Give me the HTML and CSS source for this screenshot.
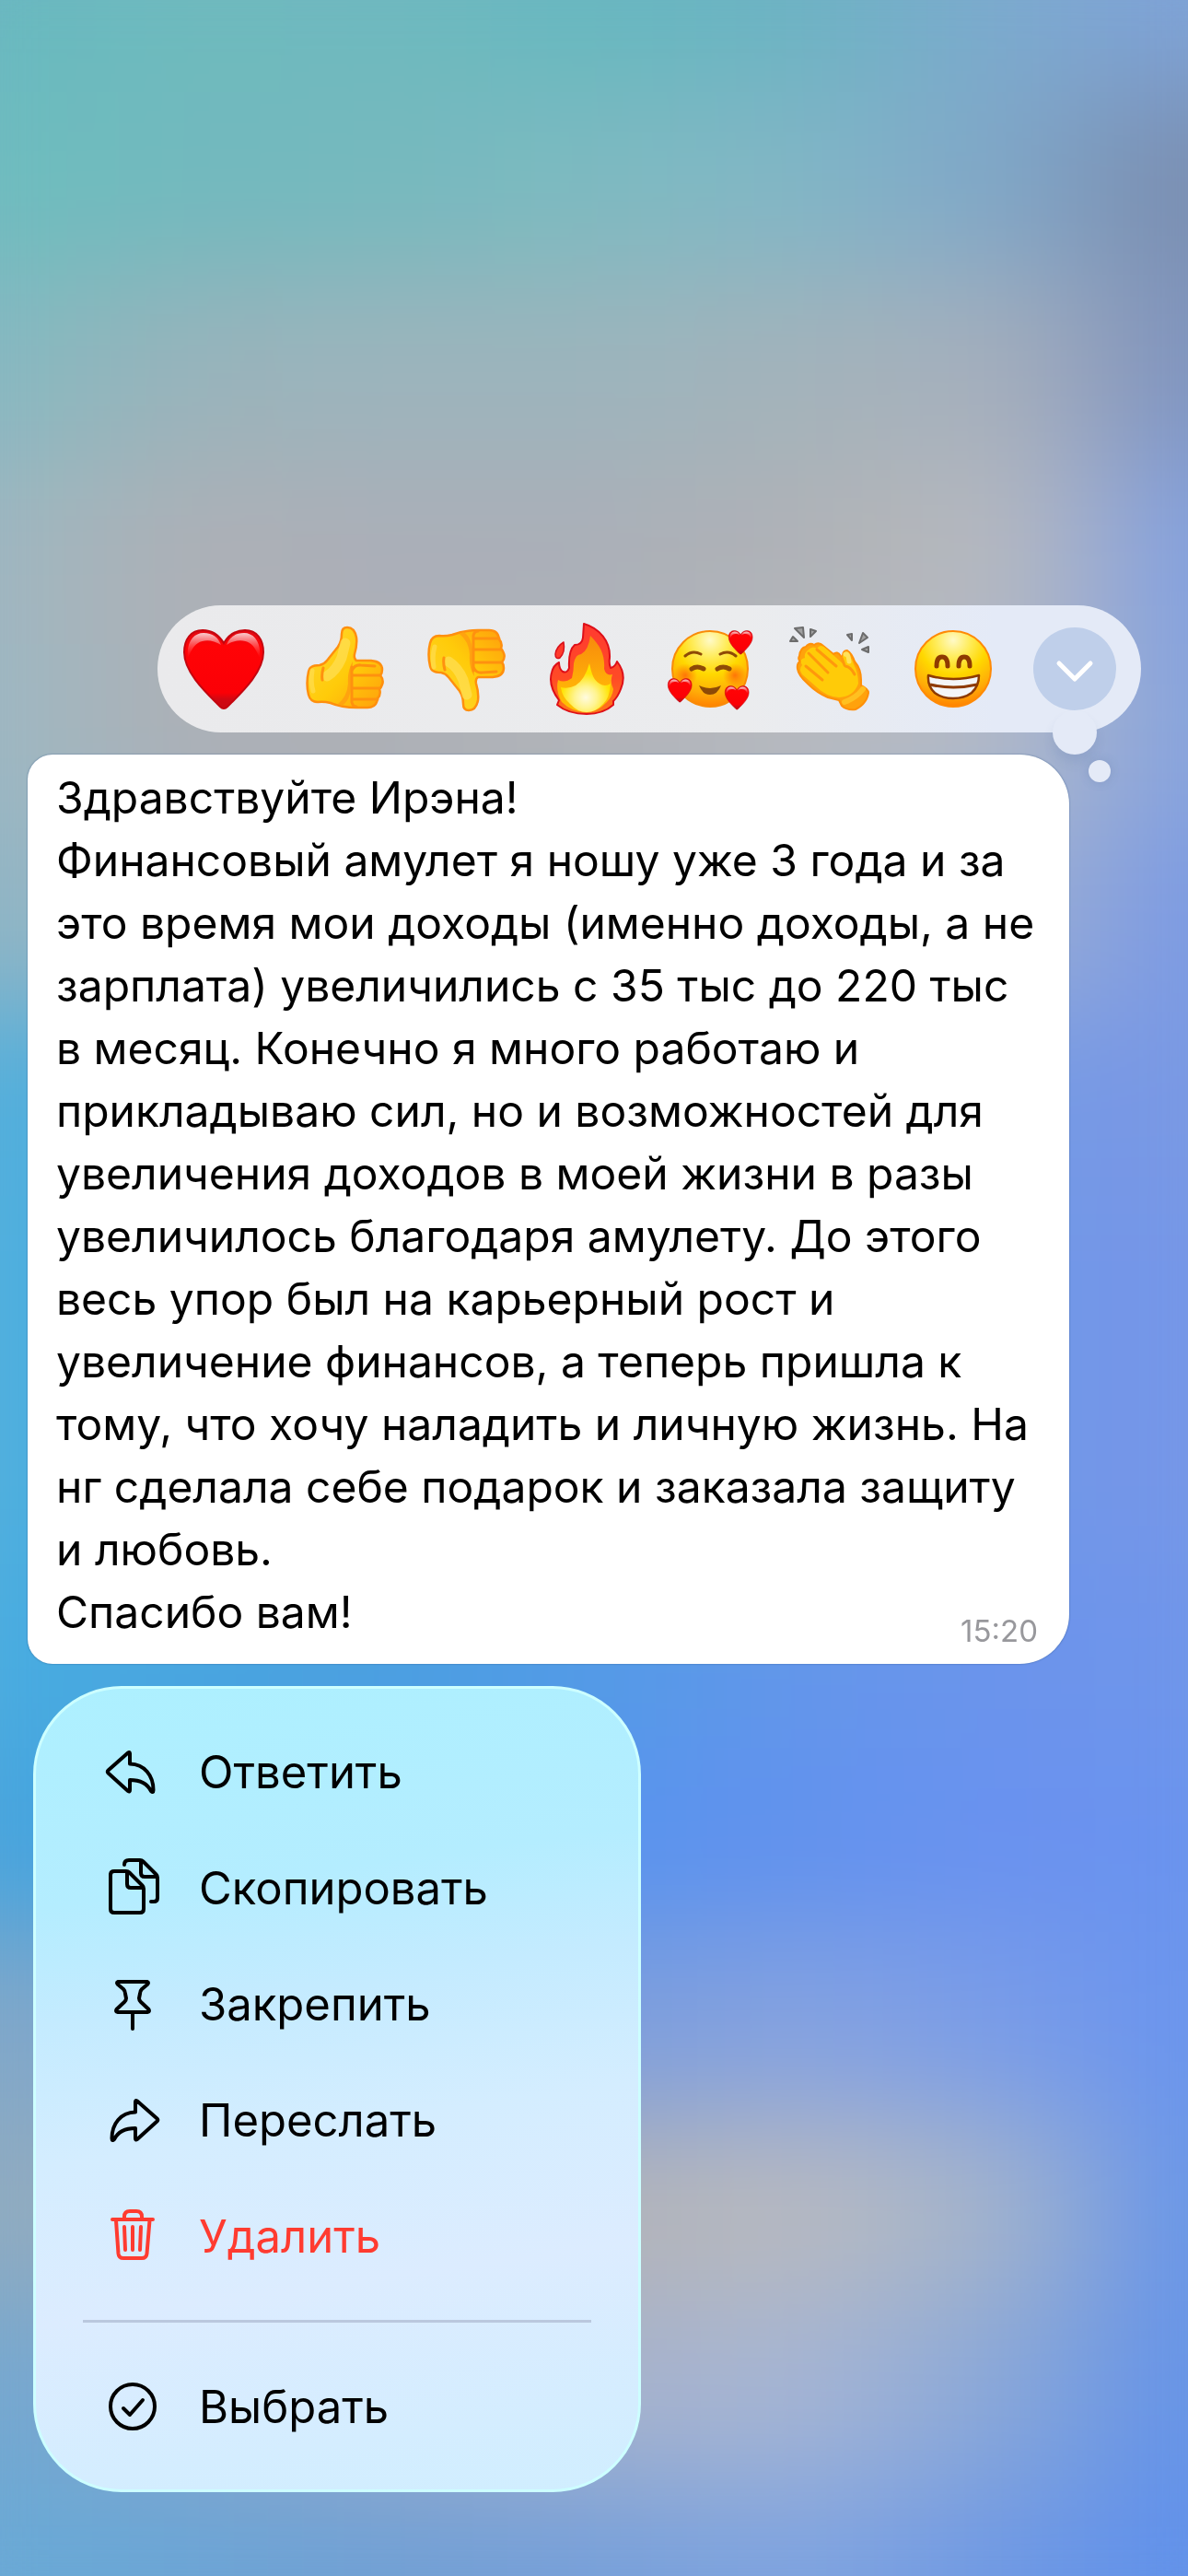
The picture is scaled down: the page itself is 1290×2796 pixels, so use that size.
FILE: index.html
```html
<!DOCTYPE html>
<html lang="ru">
<head>
<meta charset="utf-8">
<meta name="viewport" content="width=device-width, initial-scale=1">
<title>Сообщение</title>
<link rel="stylesheet" href="styles.css">
</head>
<body>
<div class="wallpaper" aria-hidden="true">
  <div class="band band-1"></div>
  <div class="band band-2"></div>
  <div class="band band-3"></div>
  <div class="band band-4"></div>
  <div class="band band-5"></div>
  <div class="band band-6"></div>
  <div class="band band-7"></div>
  <div class="band band-8"></div>
  <div class="band band-9"></div>
  <div class="band band-10"></div>
  <div class="band band-11"></div>
  <div class="band band-12"></div>
  <div class="band band-13"></div>
  <div class="band band-14"></div>
  <div class="band band-15"></div>
</div>

<svg class="defs" width="0" height="0" aria-hidden="true">
  <defs>
    <linearGradient id="heartFill" x1="0" y1="0" x2="0" y2="1">
      <stop offset="0" stop-color="#e00a14"/><stop offset=".2" stop-color="#ff0306"/><stop offset=".8" stop-color="#fb0006"/><stop offset=".88" stop-color="#d20812"/><stop offset="1" stop-color="#c80a14"/>
    </linearGradient>
    <linearGradient id="shine" x1="0" y1="0" x2="0" y2="1">
      <stop offset="0" stop-color="#fff" stop-opacity=".8"/><stop offset="1" stop-color="#ff6a6a" stop-opacity="0"/>
    </linearGradient>
    <radialGradient id="faceFill" cx=".5" cy=".12" r=".9">
      <stop offset="0" stop-color="#fffac8"/><stop offset=".25" stop-color="#ffec5a"/><stop offset=".5" stop-color="#ffd800"/><stop offset=".78" stop-color="#ffac08"/><stop offset="1" stop-color="#ff7d00"/>
    </radialGradient>
    <radialGradient id="blush">
      <stop offset="0" stop-color="#ff5a0a" stop-opacity=".75"/><stop offset="1" stop-color="#ff6a00" stop-opacity="0"/>
    </radialGradient>
    <linearGradient id="handFill" x1="0" y1="0" x2="1" y2="1">
      <stop offset="0" stop-color="#ffd832"/><stop offset=".55" stop-color="#ffcb0a"/><stop offset="1" stop-color="#ff9f0c"/>
    </linearGradient>
    <linearGradient id="flameOuter" x1="0" y1="0" x2="0" y2="1">
      <stop offset="0" stop-color="#ff3a30"/><stop offset=".6" stop-color="#ff4a26"/><stop offset="1" stop-color="#ff7a18"/>
    </linearGradient>
    <linearGradient id="flameMid" x1="0" y1="0" x2="0" y2="1">
      <stop offset="0" stop-color="#f78a0c"/><stop offset=".6" stop-color="#ffae08"/><stop offset="1" stop-color="#ffc400"/>
    </linearGradient>
    <radialGradient id="flameCore" cx=".5" cy=".7" r=".5">
      <stop offset="0" stop-color="#fffbe0"/><stop offset=".45" stop-color="#fff490"/><stop offset="1" stop-color="#ffe300"/>
    </radialGradient>
    <g id="heart">
      <path d="M54 26C48 16 40 12 31 12 18 12 11 22 11 36 11 58 35 80 50 95Q54 99 58 95C73 80 97 58 97 36 97 22 90 12 77 12 68 12 60 16 54 26Z" fill="url(#heartFill)" stroke="#c4060f" stroke-width="2"/>
      <path d="M15 42C13 24 22 15 32 15 42 15 48 20 51 28 42 22 32 22 26 26 20 30 18 36 15 42ZM93 42C95 24 86 15 76 15 66 15 60 20 57 28 66 22 76 22 82 26 88 30 90 36 93 42Z" fill="url(#shine)"/>
    </g>
    <g id="thumb" stroke-linejoin="round" stroke-linecap="round">
      <path d="M17 52Q20 50 26 50Q31 49 34 45L46 30Q50 24 50 16Q50 9 56 9Q64 9 66 20Q67 28 64 38Q63 43 66 45H82Q94 46 94 55Q94 59 92 61Q96 66 94 71Q93 74 91 76Q93 82 89 86Q88 96 78 96H66Q50 96 38 91Q30 89 24 90Q16 90 14 82Q11 70 14 57Q15 53 17 52Z" fill="url(#handFill)" stroke="#ff8f0e" stroke-width="2.5"/>
      <path d="M50 94Q58 90 60 76Q61 60 62 46Q56 56 57 70Q56 84 46 92Z" fill="#ffa30f"/>
      <path d="M34 62Q44 56 50 42L54 26" fill="none" stroke="#ffdf55" stroke-width="11" opacity=".7"/>
      <path d="M18 56Q16 68 19 78" fill="none" stroke="#ffe05a" stroke-width="5" opacity=".6"/>
      <path d="M30 53Q28 60 29 66M61 56Q64 49 71 50L86 51M61 61H92M61 75H91M62 87H89M61 52V90Q62 95 66 95" fill="none" stroke="#ff910f" stroke-width="3"/>
    </g>
    <g id="grinEye"><path d="M36 51Q36 41 42 41T48 51" fill="none" stroke="#8e3a00" stroke-width="5" stroke-linecap="round"/></g>
  </defs>
</svg>

<main class="screen">
  <div class="reactions" role="toolbar" aria-label="Реакции">
    <button class="reaction" type="button" aria-label="Сердце">
      <svg viewBox="0 0 108 108"><use href="#heart"/></svg>
    </button>
    <button class="reaction" type="button" aria-label="Палец вверх">
      <svg viewBox="0 0 108 108"><use href="#thumb"/></svg>
    </button>
    <button class="reaction" type="button" aria-label="Палец вниз">
      <svg viewBox="0 0 108 108"><use href="#thumb" transform="translate(0 108) scale(1 -1)"/></svg>
    </button>
    <button class="reaction" type="button" aria-label="Огонь">
      <svg viewBox="0 0 108 108" stroke-linejoin="round">
        <path d="M27 25Q29 36 23 42Q18 44 18 38Q19 30 27 25Z" fill="#ff3b2c" stroke="#d8101a" stroke-width="1.5"/>
        <path d="M49 5C66 10 78 24 77 42Q76 48 78 53Q83 52 85 46Q96 60 89 76Q86 84 81 89L81 93Q70 103 52 103Q32 103 20 93L22 88Q10 72 14 58Q16 50 22 47Q22 54 26 57Q31 59 33 53Q32 34 39 28Q47 28 48 20Z" fill="url(#flameOuter)" stroke="#de0f18" stroke-width="2"/>
        <path d="M56 18C68 30 72 40 71 54Q73 62 80 60Q77 68 81 76Q80 84 74 90Q64 101 52 101Q36 101 25 90Q18 78 21 66Q28 70 36 64Q38 56 38 48Q40 38 46 38Q54 34 56 18Z" fill="url(#flameMid)"/>
        <path d="M55 48C58 62 60 66 66 70Q72 74 78 70Q77 86 70 92Q62 101 52 101Q42 101 34 92Q25 84 24 74Q32 76 40 72Q50 66 55 48Z" fill="url(#flameCore)"/>
      </svg>
    </button>
    <button class="reaction" type="button" aria-label="Влюблённый">
      <svg viewBox="0 0 108 108">
        <circle cx="54" cy="54" r="41" fill="url(#faceFill)" stroke="#f98b08" stroke-width="2"/>
        <circle cx="27" cy="61" r="13" fill="url(#blush)"/><circle cx="81" cy="61" r="13" fill="url(#blush)"/>
        <g fill="none" stroke="#8e4a06" stroke-linecap="round">
          <path d="M27 40Q35 33 44 38M65 38Q74 33 82 40" stroke-width="3"/>
          <path d="M34 54Q40 50 47 54M62 54Q68 50 75 54" stroke-width="5"/>
        </g>
        <path d="M42 72Q54 78 66 72Q62 82 54 82T42 72Z" fill="#8e4a06"/>
        <use href="#heart" transform="translate(71 9) scale(.3)"/>
        <use href="#heart" transform="translate(5 61) scale(.3)"/>
        <use href="#heart" transform="translate(67 69) scale(.3)"/>
      </svg>
    </button>
    <button class="reaction" type="button" aria-label="Аплодисменты">
      <svg viewBox="0 0 108 108" stroke-linejoin="round" stroke-linecap="round">
        <g fill="#a2a2a2" stroke="#6c6c6c" stroke-width="2">
          <path d="M14 10L23 9L24 20ZM31 11L37 13L31 19ZM12 19L17 24L9 24ZM71 17L76 16L76 23ZM88 15L93 20L84 26ZM94 30L94 36L87 33Z"/>
        </g>
        <path d="M19 40Q20 31 26 30Q30 25 35 28Q40 24 45 29L56 38Q60 34 64 40L66 44Q65 34 71 34Q76 37 79 46Q86 54 86 66V72Q94 76 94 80Q92 92 80 98Q70 99 65 94L62 88L50 85Q38 80 28 70Q18 61 17 54Q16 48 20 46Q17 43 19 40Z" fill="#ffa20c" stroke="#ff9008" stroke-width="2"/>
        <path d="M28 34Q33 28 38 32Q42 26 48 32L68 50Q63 38 70 36Q76 42 78 49Q83 58 83 70Q78 84 62 85Q48 84 38 74L22 60Q18 54 22 50Q18 43 25 42Q24 37 28 34Z" fill="#ffcb08"/>
        <path d="M69 38Q72 36 73 46" stroke="#ffe25a" stroke-width="5" fill="none"/>
        <path d="M38 33L59 51M29 37L50 58M26 51L44 66M69 51Q75 52 79 60M65 42L68 50" fill="none" stroke="#ff980c" stroke-width="3"/>
        <path d="M68 90Q80 86 88 76" fill="none" stroke="#ffc020" stroke-width="6"/>
      </svg>
    </button>
    <button class="reaction" type="button" aria-label="Улыбка">
      <svg viewBox="0 0 108 108">
        <circle cx="54" cy="54" r="41" fill="url(#faceFill)" stroke="#ff8a06" stroke-width="2"/>
        <use href="#grinEye"/><use href="#grinEye" x="24"/>
        <path d="M27 61Q54 69 82 61Q82 73 74 80Q66 86 54 86T34 80Q26 73 27 61Z" fill="#f4f5f8" stroke="#8e3a00" stroke-width="2.5" stroke-linejoin="round"/>
        <path d="M29 71Q54 77 80 71" fill="none" stroke="#8e3a00" stroke-width="3"/>
      </svg>
    </button>
    <button class="reaction" type="button" aria-label="Ещё реакции">
      <svg viewBox="0 0 108 108">
        <circle cx="54" cy="54" r="45" fill="#bfcfea"/>
        <path d="M37 48L54 65L71 48" fill="none" stroke="#fff" stroke-width="5" stroke-linecap="round" stroke-linejoin="round"/>
      </svg>
    </button>
  </div>

  <article class="message">
    <p class="message-text">Здравствуйте Ирэна!<br>
      Финансовый амулет я ношу уже 3 года и за<br>
      это время мои доходы (именно доходы, а не<br>
      зарплата) увеличились с 35 тыс до 220 тыс<br>
      в месяц. Конечно я много работаю и<br>
      прикладываю сил, но и возможностей для<br>
      увеличения доходов в моей жизни в разы<br>
      увеличилось благодаря амулету. До этого<br>
      весь упор был на карьерный рост и<br>
      увеличение финансов, а теперь пришла к<br>
      тому, что хочу наладить и личную жизнь. На<br>
      нг сделала себе подарок и заказала защиту<br>
      и любовь.<br>
      Спасибо вам!</p>
    <time class="message-time" datetime="15:20">15:20</time>
  </article>

  <div class="menu">
    <button class="menu-item" type="button">
      <svg class="icon" viewBox="0 0 72 72"><path d="M31 15.5L9.5 34.5Q8 36 9.5 37.5L31 57Q33 58.5 33 56V45C45 45 52 49 56 57Q58.5 59.5 58.5 56C58.5 40 49 28 33 27.5V16.5Q33 14 31 15.5Z"/></svg>
      <span>Ответить</span>
    </button>
    <button class="menu-item" type="button">
      <svg class="icon" viewBox="0 0 72 72"><path d="M16 18H29Q31 18 32.5 19.5L46.5 33.5Q48 35 48 37V59Q48 63 44 63H16Q12 63 12 59V22Q12 18 16 18ZM30 19V32Q30 36 34 36H47M27 11Q27 6 32 6H44Q46 6 47.5 7.5L61.5 21.5Q63 23 63 25V47Q63 51 59 51H56M45 7V20Q45 24 49 24H62"/></svg>
      <span>Скопировать</span>
    </button>
    <button class="menu-item" type="button">
      <svg class="icon" viewBox="0 0 72 72"><path d="M20 12H52Q54 13 52 15L46 20Q44 22 44 25L43 30Q43 32 45 34L53.5 42Q55 44.5 52 45H20Q17 44.5 18.5 42L27 34Q29 32 29 30L28 25Q28 22 26 20L20 15Q18 13 20 12ZM36 45V63"/></svg>
      <span>Закрепить</span>
    </button>
    <button class="menu-item" type="button">
      <svg class="icon" viewBox="0 0 72 72"><path d="M41 15.5L62.5 34.5Q64 36 62.5 37.5L41 57Q39 58.5 39 56V45C27 45 20 49 16 57Q13.5 59.5 13.5 56C13.5 40 23 28 39 27.5V16.5Q39 14 41 15.5Z"/></svg>
      <span>Переслать</span>
    </button>
    <button class="menu-item danger" type="button">
      <svg class="icon" viewBox="0 0 72 72"><path d="M14 18H58M27 17V15Q27 9 33 9H40Q46 9 46 15V17M18 19L20.5 55Q21 60 26 60H46Q51 60 51.5 55L54.5 19M27 26L28 51M36 26V51M45 26L44 51"/></svg>
      <span>Удалить</span>
    </button>
    <hr class="separator">
    <button class="menu-item" type="button">
      <svg class="icon" viewBox="0 0 72 72"><circle cx="36" cy="36" r="24"/><path d="M26 38L33 45L47 29"/></svg>
      <span>Выбрать</span>
    </button>
  </div>
</main>
</body>
</html>
```
FILE: styles.css
```css
* { box-sizing: border-box; }

body {
  margin: 0;
  min-height: 100vh;
  position: relative;
  overflow-x: hidden;
  background: #7ea3d0;
  color: #000;
  font-family: Inter, "Noto Sans", sans-serif;
  font-size: 49px;
}

button {
  border: 0;
  padding: 0;
  background: none;
  color: inherit;
  font: inherit;
  text-align: left;
  cursor: pointer;
}

.defs { position: absolute; }

/* Blurred wallpaper: stacked horizontal gradients melted together */
.wallpaper {
  position: fixed;
  inset: -100px;
  z-index: -1;
  display: flex;
  flex-direction: column;
  filter: blur(64px);
}
.band {
  flex: 1;
  background: linear-gradient(90deg, var(--a) 7%, var(--b) 20%, var(--c) 35%, var(--d) 50%, var(--e) 65%, var(--f) 80%, var(--g) 93%);
}
.band-1 { --a: #68b9bf; --b: #6ebabd; --c: #6fb9be; --d: #66b8bf; --e: #6cb3c2; --f: #7daace; --g: #7fa2d8; }
.band-2 { --a: #6ebdbe; --b: #72b9be; --c: #76b9be; --d: #7ebac0; --e: #82b6c6; --f: #80a6c8; --g: #7a8cae; }
.band-3 { --a: #86b9c0; --b: #98b3bb; --c: #9cb4bc; --d: #9cb4bc; --e: #a3b3bb; --f: #a6afbc; --g: #7e92be; }
.band-4 { --a: #9fb7c0; --b: #aeb0b6; --c: #abafb8; --d: #abafb8; --e: #b0b2b6; --f: #b8babf; --g: #829fe0; }
.band-5 { --a: #9eb8c2; --b: #adb0b6; --c: #aeb0b5; --d: #b2b4b8; --e: #b8babe; --f: #b2bac8; --g: #86a2de; }
.band-6 { --a: #90b6c4; --b: #9ab2c4; --c: #a0b0c4; --d: #a0b0c8; --e: #a0b0cc; --f: #9cafd2; --g: #7b99e4; }
.band-7 { --a: #50b0dc; --b: #58a8dc; --c: #60a0e0; --d: #68a0e0; --e: #6c9ce4; --f: #7499e6; --g: #7a98e4; }
.band-8, .band-9 { --a: #4eb0de; --b: #4eaade; --c: #54a4e0; --d: #5a9ee4; --e: #6499e8; --f: #7097e8; --g: #7696e8; }
.band-10 { --a: #48ade0; --b: #49a6e0; --c: #4aa0e0; --d: #529be6; --e: #6496ea; --f: #6b94ec; --g: #7095ea; }
.band-11 { --a: #46a5dd; --b: #4aa0e0; --c: #5098e6; --d: #5893ee; --e: #6292ee; --f: #6a92f0; --g: #6a93ee; }
.band-12 { --a: #80a8c8; --b: #80a2d0; --c: #7c9ed6; --d: #7c9ddc; --e: #85a2e0; --f: #799ce8; --g: #6a94ee; }
.band-13 { --a: #8fabc0; --b: #9cacbc; --c: #a8aebc; --d: #b2b3b8; --e: #b8bac0; --f: #a2b3cc; --g: #6694ea; }
.band-14 { --a: #74a8d0; --b: #84a6cc; --c: #98accc; --d: #a6b2cc; --e: #a6b5d4; --f: #88a7d8; --g: #6492e8; }
.band-15 { --a: #68aad6; --b: #6aa5d6; --c: #709fd4; --d: #769fda; --e: #80a4e0; --f: #6e98e4; --g: #5f90ec; }

.screen {
  display: flex;
  flex-direction: column;
  align-items: flex-start;
  padding: 657px 51px 91px 30px;
}

/* Reaction bar */
.reactions {
  position: relative;
  align-self: flex-end;
  display: flex;
  gap: 24px;
  padding: 15px 18px;
  border-radius: 69px;
  background: linear-gradient(90deg, #eaeaec 0%, #ebecee 60%, #e4eaf7 85%);
}
.reactions::before,
.reactions::after {
  content: "";
  position: absolute;
  border-radius: 50%;
  background: #e4eaf7;
}
.reactions::before {
  right: 48px;
  bottom: -24px;
  width: 48px;
  height: 48px;
  box-shadow: 0 9px 12px rgba(60, 90, 140, .12);
}
.reactions::after {
  right: 33px;
  bottom: -54px;
  width: 24px;
  height: 24px;
  box-shadow: 0 0 12px rgba(60, 90, 140, .2);
}
.reaction {
  position: relative;
  z-index: 1;
  width: 108px;
  height: 108px;
}
.reaction svg { display: block; width: 100%; height: 100%; }

/* Message bubble */
.message {
  display: grid;
  width: calc(100% - 78px);
  margin-top: 24px;
  padding: 13px 34px 22px 31px;
  border-radius: 27px 54px 54px 27px;
  background: #fff;
  box-shadow: 0 0 2px rgba(40, 80, 130, .7);
}
.message-text {
  grid-area: 1 / 1;
  margin: 0;
  font-size: 48px;
  line-height: 68px;
  white-space: nowrap;
}
.message-time {
  grid-area: 1 / 1;
  align-self: end;
  justify-self: end;
  color: #98989c;
  font-size: 33px;
  line-height: 28px;
}

/* Context menu */
.menu {
  display: flex;
  flex-direction: column;
  width: 660px;
  margin: 24px 0 0 6px;
  padding: 27px 0;
  border: 3px solid #cdffff;
  border-radius: 96px;
  background: linear-gradient(172deg, #adf0ff 0%, #b4edff 25%, #c4ebff 38%, #d4edff 54%, #dcecff 72%, #d4edff 90%, #d0eeff 100%);
}
.menu-item {
  display: flex;
  align-items: center;
  gap: 36px;
  height: 126px;
  padding: 0 69px;
}
.icon {
  flex: none;
  width: 72px;
  height: 72px;
  fill: none;
  stroke: currentColor;
  stroke-width: 4px;
  stroke-linecap: round;
  stroke-linejoin: round;
}
.danger { color: #ff3b30; }
.separator {
  align-self: stretch;
  height: 3px;
  margin: 28px 51px;
  border: 0;
  background: #bac8de;
}
```
